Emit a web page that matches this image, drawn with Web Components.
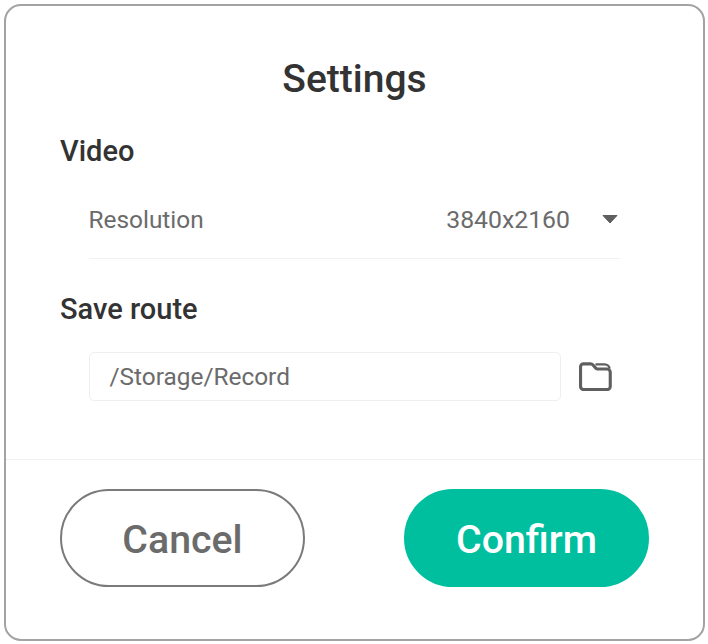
<!DOCTYPE html>
<html lang="en"><head><meta charset="utf-8"><title>Settings</title>
<style>html,body{margin:0;background:#fff}body{font-family:Roboto,"Liberation Sans",sans-serif;}</style>
</head><body>
<settings-dialog></settings-dialog>
<script>
function def(name, css, html){
  customElements.define(name, class extends HTMLElement{
    constructor(){super();this.attachShadow({mode:'open'}).innerHTML='<style>'+css+'</style>'+html;}
  });
}
def('section-title',`:host{display:block;font-size:29px;line-height:32px;font-weight:500;color:#333}`,`<slot></slot>`);
def('select-row',`:host{display:flex;align-items:center;justify-content:space-between;height:78px;margin:13px 83px 0 82.500px;border-bottom:1px solid #f1f1f1;font-size:24.400px;color:#6b6b6b}
.v{display:flex;align-items:center;gap:32px;padding-right:2px;font-size:24.800px}svg{display:block}`,
`<span><slot name="label"></slot></span><span class="v"><slot name="value"></slot><svg width="16" height="10" viewBox="0 0 16 10"><path d="M1 1.500h14L8 9z" fill="#5f5f5f" stroke="#5f5f5f" stroke-linejoin="round"/></svg></span>`);
def('path-field',`:host{display:flex;align-items:center;gap:18px;margin:0 0 0 82.500px;font-size:24.400px;color:#6b6b6b}
.box{box-sizing:border-box;width:472px;height:49px;border:1px solid #efefef;border-radius:5px;padding-left:20px;display:flex;align-items:center}svg{display:block;margin-top:-1px}`,
`<div class="box"><slot></slot></div><svg width="33" height="30" viewBox="0 0 34 30" fill="none" stroke="#5f5f5f" stroke-width="3.200" stroke-linejoin="round"><path d="M1.600 5.500a3 3 0 0 1 3-3h7.400a3 3 0 0 1 2.200 1l3.300 3.600a2 2 0 0 0 1.500.7h10a3.300 3.300 0 0 1 3.200 3.300v14.600a3.300 3.300 0 0 1-3.200 3.300H4.800a3.200 3.200 0 0 1-3.200-3.300z"/><path d="M17 3h9.500a5 5 0 0 1 5 4.500" stroke-width="2.500"/></svg>`);
def('pill-button',`:host{box-sizing:border-box;display:flex;align-items:center;justify-content:center;width:245px;height:97.500px;padding-top:4px;border-radius:49px;font-size:39.300px;font-weight:500;border:2px solid #7a7a7a;color:#6b6b6b;background:#fff}
:host([primary]){background:#00bf9f;border-color:#00bf9f;color:#fff}`,`<slot></slot>`);
def('settings-dialog',`:host{display:block;padding:4px 3px 3px 4px;height:644px;box-sizing:border-box}
.card{box-sizing:border-box;height:100%;border:2px solid #a3a3a3;border-radius:17px;background:#fff;display:flex;flex-direction:column}
h1{margin:0;padding-top:49px;font-size:39px;line-height:48px;font-weight:500;color:#333;text-align:center}
section-title{margin-left:54px}
.t1{margin-top:32px}.t2{margin-top:34px}
path-field{margin-top:27px}
.foot{margin-top:auto;border-top:1px solid #f0f0f0;display:flex;justify-content:space-between;padding:29px 54px 52.500px 54px}`,
`<div class="card"><h1>Settings</h1>
<section-title class="t1">Video</section-title>
<select-row><span slot="label">Resolution</span><span slot="value">3840x2160</span></select-row>
<section-title class="t2">Save route</section-title>
<path-field>/Storage/Record</path-field>
<div class="foot"><pill-button>Cancel</pill-button><pill-button primary>Confirm</pill-button></div></div>`);
</script>
</body></html>
